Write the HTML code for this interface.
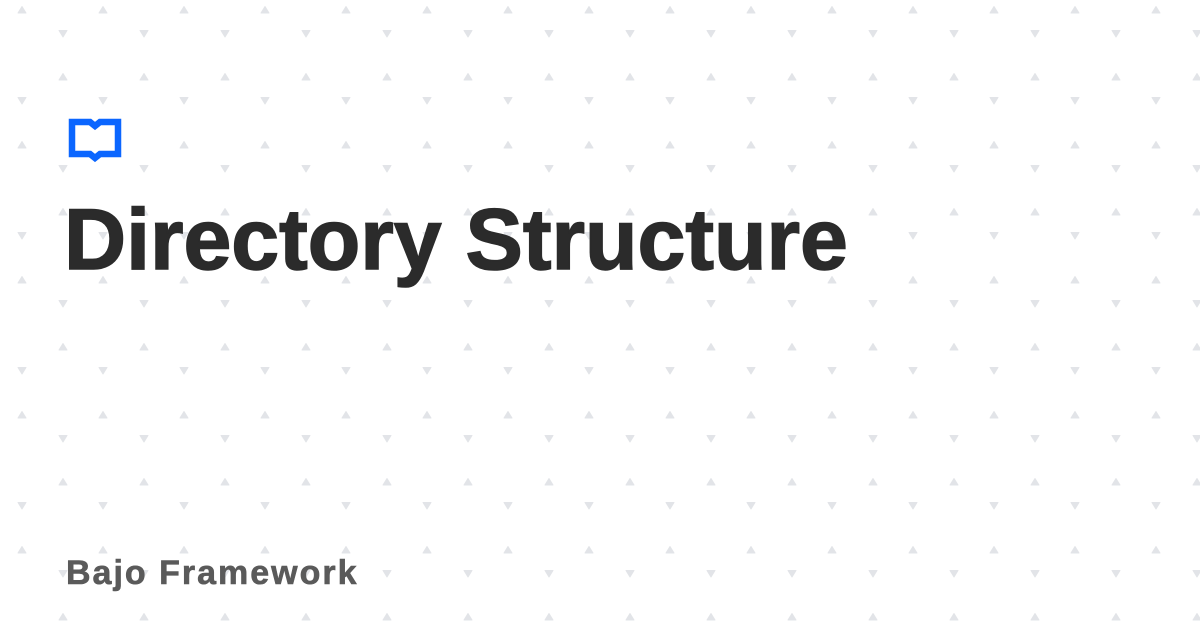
<!DOCTYPE html>
<html><head><meta charset="utf-8"><style>
html,body{margin:0;padding:0;}
body{width:1200px;height:630px;background:#fff;position:relative;overflow:hidden;font-family:"Liberation Sans",sans-serif;}
svg.bg{position:absolute;left:0;top:0;}
.t{position:absolute;left:64px;top:190px;font-size:86px;font-weight:bold;color:#2b2b2b;line-height:100px;white-space:nowrap;-webkit-text-stroke:1.5px #2b2b2b;}
.f{position:absolute;left:66px;top:553px;font-size:34px;font-weight:bold;color:#5a5a5a;line-height:40px;letter-spacing:2px;white-space:nowrap;-webkit-text-stroke:0.6px #5a5a5a;}
</style></head><body>
<svg class="bg" width="1200" height="630">
<defs>
<pattern id="p" x="0" y="0" width="81" height="135" patternUnits="userSpaceOnUse">
<path d="M22 6.5 L26 13 L18 13 Z" fill="#e2e4e8" stroke="#e2e4e8" stroke-width="1" stroke-linejoin="round"/>
<path d="M63 73.5 L67 80 L59 80 Z" fill="#e2e4e8" stroke="#e2e4e8" stroke-width="1" stroke-linejoin="round"/>
<path d="M59 30.5 L67 30.5 L63 37 Z" fill="#e2e4e8" stroke="#e2e4e8" stroke-width="1" stroke-linejoin="round"/>
<path d="M18 97.5 L26 97.5 L22 104 Z" fill="#e2e4e8" stroke="#e2e4e8" stroke-width="1" stroke-linejoin="round"/>
</pattern>
</defs>
<rect width="1200" height="630" fill="url(#p)"/>
<path d="M72 122 H90 L95 126 L100 122 H118 V154 H100 L95 158 L90 154 H72 Z" fill="#fff" stroke="#0b66ff" stroke-width="6.5" stroke-linejoin="miter"/>
</svg>
<div class="t">Directory Structure</div>
<div class="f">Bajo Framework</div>
</body></html>
